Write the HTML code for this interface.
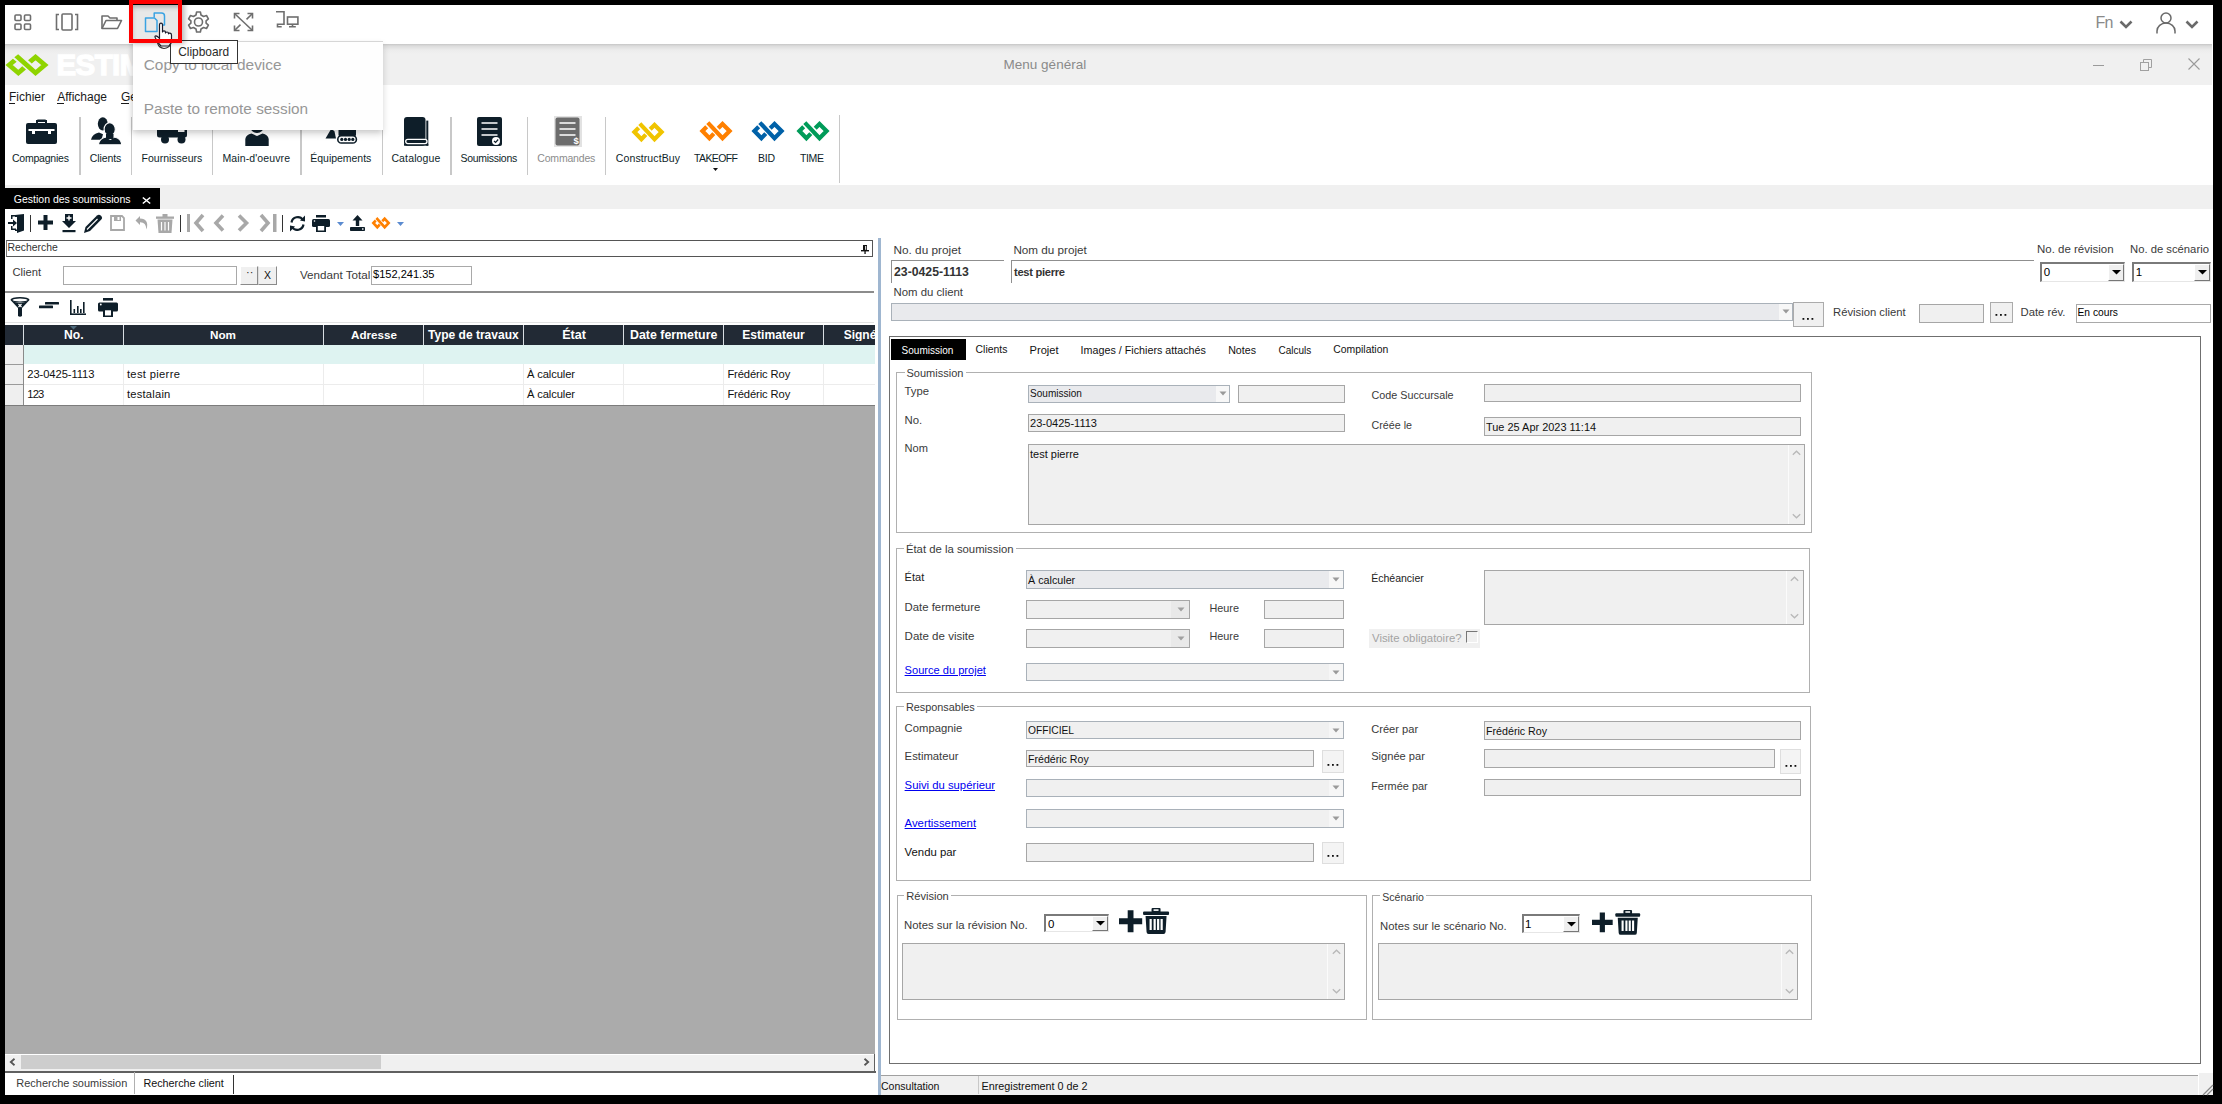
<!DOCTYPE html>
<html><head><meta charset="utf-8"><title>Menu général</title>
<style>
html,body{margin:0;padding:0;}
body{width:2222px;height:1104px;position:relative;overflow:hidden;background:#000;font-family:"Liberation Sans",sans-serif;}
.t{position:absolute;white-space:pre;line-height:1;font-family:"Liberation Sans",sans-serif;}
.r{position:absolute;box-sizing:border-box;}
svg.r{overflow:visible;}
</style></head><body>

<div class="r" style="left:5.0px;top:5.0px;width:2208.0px;height:1089.7px;background:#fff;"></div>
<div class="r" style="left:5.0px;top:5.0px;width:2208.0px;height:39.0px;background:#fff;"></div>
<svg class="r" style="left:14px;top:14px;" width="18" height="17" viewBox="0 0 18 17"><g fill="none" stroke="#6e6e6e" stroke-width="1.6"><rect x="1" y="1" width="6" height="5.5" rx="1"/><rect x="10.5" y="1" width="6" height="5.5" rx="1"/><rect x="1" y="10" width="6" height="5.5" rx="1"/><rect x="10.5" y="10" width="6" height="5.5" rx="1"/></g></svg>
<svg class="r" style="left:55px;top:13px;" width="24" height="18" viewBox="0 0 24 18"><g fill="none" stroke="#6e6e6e" stroke-width="1.6"><path d="M4 1.5 H1.5 V16.5 H4"/><path d="M20 1.5 H22.5 V16.5 H20"/><rect x="7" y="1" width="10" height="16" rx="1"/></g></svg>
<svg class="r" style="left:101px;top:15px;" width="22" height="15" viewBox="0 0 22 15"><g fill="none" stroke="#6e6e6e" stroke-width="1.6" stroke-linejoin="round"><path d="M1 13.5 V1 H7 L9 3 H16 V5.5"/><path d="M1 13.5 L5 5.5 H20.5 L16.5 13.5 Z"/></g></svg>
<div class="r" style="left:129.0px;top:5.0px;width:53.0px;height:38.0px;background:#e8e8e8;box-shadow:inset 5px 4px 5px -2px rgba(0,0,0,0.28);"></div>
<svg class="r" style="left:144px;top:12px;" width="22" height="21" viewBox="0 0 22 21"><g fill="none" stroke="#3aa2e2" stroke-width="1.5" stroke-linejoin="round"><path d="M10.2 5.6 V1 H17.5 Q20.5 1 20.5 4 V13 H17"/><path d="M1.5 6 H10.5 L13 8.5 V19.5 H1.5 Z"/></g></svg>
<svg class="r" style="left:188px;top:11px;" width="21" height="22" viewBox="0 0 21 22"><g fill="none" stroke="#6e6e6e" stroke-width="1.6" stroke-linejoin="round"><path d="M8.6 1 H12.4 L13 4 L15.6 5.5 L18.5 4.5 L20.4 7.8 L18.1 9.8 V12.2 L20.4 14.2 L18.5 17.5 L15.6 16.5 L13 18 L12.4 21 H8.6 L8 18 L5.4 16.5 L2.5 17.5 L0.6 14.2 L2.9 12.2 V9.8 L0.6 7.8 L2.5 4.5 L5.4 5.5 L8 4 Z"/><circle cx="10.5" cy="11" r="4"/></g></svg>
<svg class="r" style="left:233px;top:12px;" width="21" height="20" viewBox="0 0 21 20"><g fill="none" stroke="#6e6e6e" stroke-width="1.6"><path d="M1.5 1.5 L19.5 18.5"/><path d="M19.5 1.5 L13.5 7.3"/><path d="M1.5 18.5 L7.5 12.7"/><path d="M1.5 6.5 V1.5 H6.5"/><path d="M14.5 1.5 H19.5 V6.5"/><path d="M1.5 13.5 V18.5 H6.5"/><path d="M14.5 18.5 H19.5 V13.5"/></g></svg>
<svg class="r" style="left:275px;top:10px;" width="24" height="18" viewBox="0 0 24 18"><g fill="none" stroke="#6e6e6e" stroke-width="1.6"><path d="M1 1.7 H9 V14.2 H2.5 V16.7 H6.7"/><rect x="12.5" y="7" width="10.4" height="7.2"/><path d="M17.5 14.2 V16.7 M14 16.7 H20.8"/></g></svg>
<div class="t" style="left:2095.5px;top:14.76px;font-size:16px;color:#8a8a8a;letter-spacing:-0.8px;">Fn</div>
<svg class="r" style="left:2119px;top:20px;" width="14" height="9" viewBox="0 0 14 9"><path d="M1.5 1.5 L7 7 L12.5 1.5" fill="none" stroke="#6a6a6a" stroke-width="2.6"/></svg>
<svg class="r" style="left:2156px;top:12px;" width="20" height="22" viewBox="0 0 20 22"><g fill="none" stroke="#6a6a6a" stroke-width="1.5"><circle cx="10" cy="6" r="5"/><path d="M1 21.5 V19 A9 8 0 0 1 19 19 V21.5"/></g></svg>
<svg class="r" style="left:2185px;top:20px;" width="14" height="9" viewBox="0 0 14 9"><path d="M1.5 1.5 L7 7 L12.5 1.5" fill="none" stroke="#6a6a6a" stroke-width="2.6"/></svg>
<div class="r" style="left:5.0px;top:44.0px;width:2207.0px;height:41.0px;background:linear-gradient(#c6c6c6 0px,#dcdcdc 2px,#ececec 6px,#f0f0f0 10px);"></div>
<div class="t" style="left:1003.6px;top:58.47px;font-size:13.5px;color:#8a8a8a;">Menu général</div>
<div class="r" style="left:2092.5px;top:65.0px;width:11.0px;height:1.0px;background:#9a9a9a;"></div>
<svg class="r" style="left:2140px;top:59px;" width="12" height="12" viewBox="0 0 12 12"><g fill="none" stroke="#a0a0a0" stroke-width="1"><rect x="0.5" y="3.5" width="8" height="8"/><path d="M3.5 3.5 V0.5 H11.5 V8.5 H8.5"/></g></svg>
<svg class="r" style="left:2188px;top:58px;" width="12" height="12" viewBox="0 0 12 12"><g stroke="#9a9a9a" stroke-width="1.1"><path d="M0.5 0.5 L11.5 11.5 M11.5 0.5 L0.5 11.5"/></g></svg>
<svg class="r" style="left:6px;top:54px;" width="42" height="22" viewBox="0 0 32 20" preserveAspectRatio="none"><g fill="none" stroke="#8fd400" stroke-width="4.0" stroke-linejoin="miter" stroke-miterlimit="10"><path d="M6.7 5.7 L2.4 10 L9.4 17.2 L13.8 12.6"/><path d="M7.8 1.6 L22.5 17.2 L29.6 10 L22.5 2.9 L18.2 7.2"/></g></svg>
<div class="t" style="left:56.5px;top:49.93px;font-size:29.5px;color:#ffffff;font-weight:bold;letter-spacing:-0.6px;-webkit-text-stroke:1.3px #fff;">ESTIM</div>
<div class="r" style="left:5.0px;top:85.0px;width:2208.0px;height:100.0px;background:#fff;"></div>
<div class="t" style="left:9.0px;top:90.84px;font-size:12px;color:#1a1a1a;">Fichier</div>
<div class="r" style="left:9.0px;top:102.5px;width:6.0px;height:1.0px;background:#1a1a1a;"></div>
<div class="t" style="left:57.2px;top:90.84px;font-size:12px;color:#1a1a1a;">Affichage</div>
<div class="r" style="left:57.2px;top:102.5px;width:7.0px;height:1.0px;background:#1a1a1a;"></div>
<div class="t" style="left:121.0px;top:90.84px;font-size:12px;color:#1a1a1a;">Ge</div>
<div class="r" style="left:121.0px;top:102.5px;width:8.0px;height:1.0px;background:#1a1a1a;"></div>
<div class="r" style="left:79.4px;top:117.0px;width:1.2px;height:58.0px;background:#c8c8c8;"></div>
<div class="r" style="left:131.3px;top:117.0px;width:1.2px;height:58.0px;background:#c8c8c8;"></div>
<div class="r" style="left:212.2px;top:117.0px;width:1.2px;height:58.0px;background:#c8c8c8;"></div>
<div class="r" style="left:300.4px;top:117.0px;width:1.2px;height:58.0px;background:#c8c8c8;"></div>
<div class="r" style="left:381.6px;top:117.0px;width:1.2px;height:58.0px;background:#c8c8c8;"></div>
<div class="r" style="left:450.4px;top:117.0px;width:1.2px;height:58.0px;background:#c8c8c8;"></div>
<div class="r" style="left:527.3px;top:117.0px;width:1.2px;height:58.0px;background:#c8c8c8;"></div>
<div class="r" style="left:605.3px;top:117.0px;width:1.2px;height:58.0px;background:#c8c8c8;"></div>
<div class="r" style="left:839.3px;top:115.0px;width:1.2px;height:68.0px;background:#c8c8c8;"></div>
<div class="t" style="left:11.9px;top:153.11px;font-size:10.5px;color:#0e1e29;letter-spacing:-0.216px;">Compagnies</div>
<div class="t" style="left:89.8px;top:153.11px;font-size:10.5px;color:#0e1e29;letter-spacing:-0.099px;">Clients</div>
<div class="t" style="left:141.5px;top:153.11px;font-size:10.5px;color:#0e1e29;letter-spacing:0.011px;">Fournisseurs</div>
<div class="t" style="left:222.5px;top:153.11px;font-size:10.5px;color:#0e1e29;letter-spacing:0.108px;">Main-d&#x27;oeuvre</div>
<div class="t" style="left:310.3px;top:153.11px;font-size:10.5px;color:#0e1e29;letter-spacing:-0.028px;">Équipements</div>
<div class="t" style="left:391.4px;top:153.11px;font-size:10.5px;color:#0e1e29;letter-spacing:0.142px;">Catalogue</div>
<div class="t" style="left:460.5px;top:153.11px;font-size:10.5px;color:#0e1e29;letter-spacing:-0.282px;">Soumissions</div>
<div class="t" style="left:537.3px;top:153.11px;font-size:10.5px;color:#8c8c8c;letter-spacing:-0.190px;">Commandes</div>
<div class="t" style="left:615.8px;top:153.11px;font-size:10.5px;color:#0e1e29;letter-spacing:0.107px;">ConstructBuy</div>
<div class="t" style="left:694.0px;top:153.11px;font-size:10.5px;color:#0e1e29;letter-spacing:-0.606px;">TAKEOFF</div>
<div class="t" style="left:758.0px;top:153.11px;font-size:10.5px;color:#0e1e29;letter-spacing:-0.252px;">BID</div>
<div class="t" style="left:800.0px;top:153.11px;font-size:10.5px;color:#0e1e29;letter-spacing:-0.360px;">TIME</div>
<svg class="r" style="left:26px;top:119px;" width="31" height="25" viewBox="0 0 31 25"><g fill="#0e1e29"><rect x="11" y="0.5" width="9" height="2.5" rx="0.8"/><rect x="10" y="1" width="2" height="4"/><rect x="19" y="1" width="2" height="4"/><rect x="0" y="4" width="31" height="21" rx="2"/></g><g fill="#fff"><rect x="2.5" y="10" width="26" height="2"/><rect x="6" y="10" width="3" height="5"/><rect x="22" y="10" width="3" height="5"/></g></svg>
<svg class="r" style="left:91px;top:117px;" width="31" height="28" viewBox="0 0 31 28"><g fill="#0e1e29"><ellipse cx="11.8" cy="6.8" rx="5" ry="6.6"/><path d="M0 22.7 Q1.2 17.2 8 15.6 L12 17.3 L10.5 22.7 Z"/><path d="M7.3 27.8 Q8.2 21.6 14.8 20 L19.3 22.4 L23.6 20 Q30.2 21.6 30.8 27.8 Z" stroke="#fff" stroke-width="1.1"/><ellipse cx="18.7" cy="12.3" rx="5.6" ry="6.6" stroke="#fff" stroke-width="1.1"/><rect x="15" y="17" width="7.5" height="5" fill="#0e1e29"/></g></svg>
<svg class="r" style="left:156px;top:122px;" width="32" height="23" viewBox="0 0 32 23"><g fill="#0e1e29"><rect x="1" y="0" width="30" height="15.5" rx="2.5"/><circle cx="9" cy="17.5" r="4"/><circle cx="25.5" cy="17.5" r="4"/></g><rect x="22" y="8" width="6.5" height="2" fill="#fff"/></svg>
<svg class="r" style="left:245px;top:118px;" width="24" height="28" viewBox="0 0 24 28"><g fill="#0e1e29"><circle cx="12" cy="8" r="7"/><path d="M0.3 28 V21 Q1 16.8 6.5 15.5 L12 18 L17.5 15.5 Q23 16.8 23.7 21 V28 Z"/></g></svg>
<svg class="r" style="left:325px;top:118px;" width="32" height="26" viewBox="0 0 32 26"><g fill="#0e1e29"><path d="M10 4 L18 2 V8 L13 9 Z"/><rect x="13.5" y="6" width="17.5" height="12" rx="1"/><path d="M0.5 20.5 L5.5 12 Q8 11 9.5 13.5 L11 20.5 Z"/></g><rect x="12.8" y="17.8" width="18.6" height="7.2" rx="3.6" fill="#fff" stroke="#0e1e29" stroke-width="1.6"/><g fill="#0e1e29"><circle cx="16.8" cy="21.4" r="1.6"/><circle cx="20.5" cy="21.4" r="1.6"/><circle cx="24.2" cy="21.4" r="1.6"/><circle cx="27.8" cy="21.4" r="1.6"/></g></svg>
<svg class="r" style="left:403px;top:117px;" width="26" height="29" viewBox="0 0 26 29"><g fill="#0e1e29"><rect x="1" y="0" width="21.5" height="28.7" rx="3"/><rect x="23.3" y="3.6" width="2" height="25.1"/><rect x="1" y="26.9" width="24.3" height="1.8"/></g><rect x="2.7" y="22.4" width="21.3" height="4.3" rx="2.1" fill="#0e1e29" stroke="#fff" stroke-width="1.3"/></svg>
<svg class="r" style="left:477px;top:117px;" width="26" height="30" viewBox="0 0 26 30"><g><rect x="0" y="0" width="25" height="29" rx="2" fill="#0e1e29"/><g stroke="#fff" stroke-width="1.4"><path d="M4.5 6 H20.5 M4.5 12 H20.5 M4.5 18 H20.5"/></g><circle cx="19" cy="24" r="4" fill="#fff"/><path d="M17 24 L18.6 25.5 L21.2 22.5" fill="none" stroke="#0e1e29" stroke-width="1.2"/></g></svg>
<div class="r" style="left:554.0px;top:116.0px;width:28.0px;height:31.0px;background:#e2e2e2;"></div>
<svg class="r" style="left:555px;top:117px;" width="26" height="30" viewBox="0 0 26 30"><g><rect x="0.5" y="0.5" width="24" height="28" rx="2" fill="#6c6c6c"/><g stroke="#fff" stroke-width="1.4"><path d="M4.5 6 H20.5 M4.5 12 H20.5 M4.5 18 H20.5"/></g><text x="18.6" y="27.3" font-size="9.5" font-weight="bold" fill="#fff" font-family="Liberation Sans">$</text></g></svg>
<svg class="r" style="left:632px;top:122px;" width="32" height="20" viewBox="0 0 32 20" preserveAspectRatio="none"><g fill="none" stroke="#f0c400" stroke-width="4.2" stroke-linejoin="miter" stroke-miterlimit="10"><path d="M6.7 5.7 L2.4 10 L9.4 17.2 L13.8 12.6"/><path d="M7.8 1.6 L22.5 17.2 L29.6 10 L22.5 2.9 L18.2 7.2"/></g></svg>
<svg class="r" style="left:700px;top:121px;" width="32" height="20" viewBox="0 0 32 20" preserveAspectRatio="none"><g fill="none" stroke="#ff8000" stroke-width="4.2" stroke-linejoin="miter" stroke-miterlimit="10"><path d="M6.7 5.7 L2.4 10 L9.4 17.2 L13.8 12.6"/><path d="M7.8 1.6 L22.5 17.2 L29.6 10 L22.5 2.9 L18.2 7.2"/></g></svg>
<svg class="r" style="left:752px;top:121px;" width="32" height="20" viewBox="0 0 32 20" preserveAspectRatio="none"><g fill="none" stroke="#0061a8" stroke-width="4.2" stroke-linejoin="miter" stroke-miterlimit="10"><path d="M6.7 5.7 L2.4 10 L9.4 17.2 L13.8 12.6"/><path d="M7.8 1.6 L22.5 17.2 L29.6 10 L22.5 2.9 L18.2 7.2"/></g></svg>
<svg class="r" style="left:797px;top:121px;" width="32" height="20" viewBox="0 0 32 20" preserveAspectRatio="none"><g fill="none" stroke="#009b59" stroke-width="4.2" stroke-linejoin="miter" stroke-miterlimit="10"><path d="M6.7 5.7 L2.4 10 L9.4 17.2 L13.8 12.6"/><path d="M7.8 1.6 L22.5 17.2 L29.6 10 L22.5 2.9 L18.2 7.2"/></g></svg>
<svg class="r" style="left:713px;top:168px;" width="5" height="3" viewBox="0 0 5 3"><path d="M0 0 H5 L2.5 3 Z" fill="#111"/></svg>
<div class="r" style="left:5.0px;top:185.0px;width:2208.0px;height:24.0px;background:#f0f0f0;"></div>
<div class="r" style="left:5.0px;top:188.0px;width:155.0px;height:21.0px;background:#000;"></div>
<div class="t" style="left:13.8px;top:194.01px;font-size:10.5px;color:#ffffff;">Gestion des soumissions</div>
<svg class="r" style="left:142px;top:197px;" width="9" height="7" viewBox="0 0 9 7"><path d="M0.8 0.5 L8.2 6.5 M8.2 0.5 L0.8 6.5" stroke="#fff" stroke-width="1.6"/></svg>
<div class="r" style="left:5.0px;top:209.0px;width:2208.0px;height:31.0px;background:#fff;"></div>
<svg class="r" style="left:8px;top:214px;" width="17" height="19" viewBox="0 0 17 19"><g fill="#0e1e29"><path d="M7 1 L16 0 V16.5 L9 19 V17 H7 V15.5 H9 V3 H7 Z"/><path d="M3 5 V1 H8 V2.5 H4.5 V5 Z"/><path d="M3 12 V16 H8 V14.5 H4.5 V12 Z"/><path d="M0 8 H5 V5.5 L9 9 L5 12.5 V10 H0 Z"/></g></svg>
<div class="r" style="left:30.0px;top:215.0px;width:1.2px;height:17.0px;background:#333;"></div>
<svg class="r" style="left:38px;top:215px;" width="15" height="15" viewBox="0 0 15 15"><path d="M5.5 0 H9.5 V5.5 H15 V9.5 H9.5 V15 H5.5 V9.5 H0 V5.5 H5.5 Z" fill="#0e1e29"/></svg>
<svg class="r" style="left:62px;top:214px;" width="14" height="19" viewBox="0 0 14 19"><g fill="#0e1e29"><path d="M3 0 H11 V7 H14 L7 14 L0 7 H3 Z"/><rect x="0.5" y="16" width="13" height="2.2"/></g><path d="M7 1.5 V6.5 M4.5 4 H9.5" stroke="#fff" stroke-width="1.4"/></svg>
<svg class="r" style="left:84px;top:214px;" width="19" height="19" viewBox="0 0 19 19"><g fill="#0e1e29"><path d="M0 19 L1.5 13 L13 1.5 Q15 -0.3 17 1.7 Q19 3.7 17.3 5.5 L6 17 Z"/></g><path d="M3 15.5 L13.5 5" stroke="#fff" stroke-width="1.1"/></svg>
<svg class="r" style="left:110px;top:215px;" width="15" height="16" viewBox="0 0 15 16"><g fill="none" stroke="#a8a8a8" stroke-width="1.8"><path d="M1 1 H12 L14 3 V15 H1 Z"/></g><rect x="4" y="1" width="7" height="5" fill="#a8a8a8"/><rect x="7.5" y="2" width="2" height="3" fill="#fff"/></svg>
<svg class="r" style="left:135px;top:215px;" width="14" height="15" viewBox="0 0 14 15"><path d="M5 1 L0.5 5.5 L5 10 V7.2 Q11 7 11.5 14.5 Q14.5 4 5 3.6 Z" fill="#a8a8a8"/></svg>
<svg class="r" style="left:156px;top:214px;" width="18" height="19" viewBox="0 0 18 19"><g fill="#a8a8a8"><rect x="0" y="2.5" width="18" height="2.3"/><rect x="6.5" y="0" width="5" height="3"/><path d="M1.5 5.5 H16.5 L15.5 19 H2.5 Z"/></g><g stroke="#fff" stroke-width="1.2"><path d="M5.5 8 V16.5 M9 8 V16.5 M12.5 8 V16.5"/></g></svg>
<div class="r" style="left:180.0px;top:215.0px;width:1.2px;height:17.0px;background:#333;"></div>
<svg class="r" style="left:187px;top:214px;" width="18" height="18" viewBox="0 0 18 18"><g fill="#a8a8a8"><rect x="0" y="0" width="3" height="18"/><path d="M16 1 L9 9 L16 17" fill="none" stroke="#a8a8a8" stroke-width="3.6"/></g></svg>
<svg class="r" style="left:213px;top:214px;" width="12" height="18" viewBox="0 0 12 18"><path d="M10 1.5 L3 9 L10 16.5" fill="none" stroke="#a8a8a8" stroke-width="3.6"/></svg>
<svg class="r" style="left:237px;top:214px;" width="13" height="18" viewBox="0 0 13 18"><path d="M2 1.5 L9.5 9 L2 16.5" fill="none" stroke="#a8a8a8" stroke-width="3.6"/></svg>
<svg class="r" style="left:259px;top:214px;" width="18" height="18" viewBox="0 0 18 18"><g><path d="M2 1 L9 9 L2 17" fill="none" stroke="#a8a8a8" stroke-width="3.6"/><rect x="14" y="0" width="3.5" height="18" fill="#a8a8a8"/></g></svg>
<div class="r" style="left:282.0px;top:215.0px;width:1.2px;height:17.0px;background:#333;"></div>
<svg class="r" style="left:289px;top:215px;" width="17" height="17" viewBox="0 0 17 17"><g fill="none" stroke="#0e1e29" stroke-width="2.2"><path d="M2.5 7.5 A6.3 6.3 0 0 1 14 5"/><path d="M14.5 9.5 A6.3 6.3 0 0 1 3 12"/></g><g fill="#0e1e29"><path d="M11 5.5 L16 0.5 V6.5 Z"/><path d="M6 11.5 L1 16.5 V10.5 Z"/></g></svg>
<svg class="r" style="left:312px;top:215px;" width="18" height="17" viewBox="0 0 18 17"><g fill="#0e1e29"><rect x="4" y="0" width="10" height="2.5"/><rect x="0" y="4" width="18" height="8" rx="1.5"/><rect x="4" y="9.5" width="10" height="7.5"/></g><rect x="5.8" y="11" width="6.4" height="4.5" fill="#fff"/><circle cx="2.5" cy="6" r="0.8" fill="#fff"/></svg>
<svg class="r" style="left:336.5px;top:222px;" width="7" height="4" viewBox="0 0 7 4"><path d="M0 0 H7 L3.5 4 Z" fill="#5b8bd0"/></svg>
<svg class="r" style="left:350px;top:215px;" width="15" height="16" viewBox="0 0 15 16"><g fill="#0e1e29"><path d="M7.5 0 L12.5 5.5 H9.2 V11 H5.8 V5.5 H2.5 Z"/><rect x="0" y="12" width="15" height="4" rx="0.8"/></g><rect x="12" y="13.3" width="1.5" height="1.4" fill="#fff"/></svg>
<svg class="r" style="left:372px;top:217px;" width="18" height="12" viewBox="0 0 32 20" preserveAspectRatio="none"><g fill="none" stroke="#ff8000" stroke-width="4.6" stroke-linejoin="miter" stroke-miterlimit="10"><path d="M6.7 5.7 L2.4 10 L9.4 17.2 L13.8 12.6"/><path d="M7.8 1.6 L22.5 17.2 L29.6 10 L22.5 2.9 L18.2 7.2"/></g></svg>
<svg class="r" style="left:396.5px;top:222px;" width="7" height="4" viewBox="0 0 7 4"><path d="M0 0 H7 L3.5 4 Z" fill="#5b8bd0"/></svg>
<div class="r" style="left:5.5px;top:240.0px;width:867.3px;height:17.0px;border-top:1.5px solid #555;border-bottom:1.5px solid #555;border-left:1px solid #777;border-right:1px solid #555;background:#fff;"></div>
<div class="t" style="left:7.4px;top:243.18px;font-size:10.42px;color:#333;">Recherche</div>
<svg class="r" style="left:861px;top:244.5px;" width="8" height="9" viewBox="0 0 8 9"><g fill="#111"><rect x="2" y="0" width="4" height="6"/><rect x="0" y="5" width="8" height="1.4"/><rect x="3.4" y="6" width="1.3" height="3"/></g><rect x="4.2" y="1" width="1" height="3.8" fill="#fff"/></svg>
<div class="t" style="left:12.4px;top:267.33px;font-size:11.19px;color:#3a3a3a;">Client</div>
<div class="r" style="left:63.3px;top:266.0px;width:173.4px;height:19.0px;border:1px solid #a9a9a9;background:#fff;"></div>
<div class="r" style="left:240.3px;top:266.0px;width:18.0px;height:19.0px;background:#f0f0f0;border-top:1px solid #fff;border-left:1px solid #fff;border-right:1.5px solid #8a8a8a;border-bottom:1.5px solid #8a8a8a;"></div>
<div class="t" style="left:246.0px;top:266.69px;font-size:11px;color:#222;">··</div>
<div class="r" style="left:258.3px;top:266.0px;width:18.5px;height:19.0px;background:#f0f0f0;border-top:1px solid #fff;border-left:1px solid #ddd;border-right:1.5px solid #8a8a8a;border-bottom:1.5px solid #8a8a8a;"></div>
<div class="t" style="left:264.0px;top:270.41px;font-size:10.5px;color:#111;">X</div>
<div class="t" style="left:300.0px;top:268.84px;font-size:11.65px;color:#3a3a3a;">Vendant Total</div>
<div class="r" style="left:371.0px;top:266.0px;width:101.0px;height:19.0px;border:1px solid #a9a9a9;background:#fff;"></div>
<div class="t" style="left:373.0px;top:269.34px;font-size:11.06px;color:#000;">$152,241.35</div>
<div class="r" style="left:5.0px;top:290.5px;width:869.0px;height:2.0px;background:#8c8c8c;"></div>
<svg class="r" style="left:10px;top:297px;" width="20" height="20" viewBox="0 0 20 20"><g fill="#0e1e29"><ellipse cx="10" cy="2.8" rx="9.5" ry="2.8"/><path d="M0.5 3 Q10 9 19.5 3 L12 11 V19 Q10 20.5 8 19 V11 Z"/></g><ellipse cx="10" cy="3" rx="7.5" ry="1.5" fill="#fff"/><path d="M8.5 7 L11.5 10 M11.5 7 L8.5 10" stroke="#fff" stroke-width="1.2"/></svg>
<svg class="r" style="left:39px;top:302px;" width="20" height="9" viewBox="0 0 20 9"><g fill="#0e1e29"><rect x="6" y="0" width="14" height="2.6" rx="0.5"/><rect x="0" y="3.5" width="14" height="2.8" rx="0.5"/></g></svg>
<svg class="r" style="left:70px;top:300px;" width="16" height="15" viewBox="0 0 16 15"><g fill="#0e1e29"><rect x="0" y="0" width="1.6" height="15"/><rect x="0" y="13.4" width="16" height="1.6"/><rect x="3.5" y="9" width="1.6" height="4"/><rect x="7" y="6" width="1.6" height="7"/><rect x="10" y="9" width="1.6" height="4"/><rect x="13" y="2" width="1.6" height="11"/></g></svg>
<svg class="r" style="left:98px;top:298px;" width="20" height="19" viewBox="0 0 20 19"><g fill="#0e1e29"><rect x="5" y="0" width="10" height="2.6"/><rect x="0" y="4.5" width="20" height="9" rx="1.5"/><rect x="5" y="11" width="10" height="8"/></g><rect x="7" y="12.3" width="6" height="5.2" fill="#fff"/><circle cx="2.8" cy="6.5" r="0.9" fill="#fff"/></svg>
<div class="r" style="left:5.0px;top:322.0px;width:869.0px;height:1.2px;background:#e2e2e2;"></div>
<div class="r" style="left:5.0px;top:324.5px;width:870.0px;height:20.5px;background:#222a35;"></div>
<div class="r" style="left:22.9px;top:325.0px;width:1.3px;height:20.0px;background:#d8dde2;"></div>
<div class="r" style="left:122.9px;top:325.0px;width:1.3px;height:20.0px;background:#d8dde2;"></div>
<div class="r" style="left:323.2px;top:325.0px;width:1.3px;height:20.0px;background:#d8dde2;"></div>
<div class="r" style="left:423.1px;top:325.0px;width:1.3px;height:20.0px;background:#d8dde2;"></div>
<div class="r" style="left:523.0px;top:325.0px;width:1.3px;height:20.0px;background:#d8dde2;"></div>
<div class="r" style="left:622.7px;top:325.0px;width:1.3px;height:20.0px;background:#d8dde2;"></div>
<div class="r" style="left:722.7px;top:325.0px;width:1.3px;height:20.0px;background:#d8dde2;"></div>
<div class="r" style="left:822.9px;top:325.0px;width:1.3px;height:20.0px;background:#d8dde2;"></div>
<div class="t" style="left:64.0px;top:328.95px;font-size:12.11px;color:#fff;font-weight:bold;">No.</div>
<div class="t" style="left:210.0px;top:329.30px;font-size:11.7px;color:#fff;font-weight:bold;">Nom</div>
<div class="t" style="left:351.0px;top:329.36px;font-size:11.63px;color:#fff;font-weight:bold;">Adresse</div>
<div class="t" style="left:428.0px;top:329.01px;font-size:12.04px;color:#fff;font-weight:bold;">Type de travaux</div>
<div class="t" style="left:562.2px;top:328.53px;font-size:12.6px;color:#fff;font-weight:bold;">État</div>
<div class="t" style="left:630.0px;top:328.72px;font-size:12.38px;color:#fff;font-weight:bold;">Date fermeture</div>
<div class="t" style="left:742.3px;top:328.97px;font-size:12.09px;color:#fff;font-weight:bold;">Estimateur</div>
<div class="t" style="left:843.7px;top:329px;font-size:12px;color:#fff;font-weight:bold;width:31px;overflow:hidden;">Signé</div>
<svg class="r" style="left:70px;top:325.5px;" width="7" height="4" viewBox="0 0 7 4"><path d="M0 0 H7 L3.5 3.5 Z" fill="#4e6a7c"/></svg>
<div class="r" style="left:5.0px;top:345.0px;width:18.4px;height:60.0px;background:#efefef;"></div>
<div class="r" style="left:5.0px;top:364.0px;width:18.4px;height:1.0px;background:#9a9a9a;"></div>
<div class="r" style="left:5.0px;top:384.0px;width:18.4px;height:1.0px;background:#9a9a9a;"></div>
<div class="r" style="left:22.8px;top:345.0px;width:1.2px;height:60.0px;background:#8a8a8a;"></div>
<div class="r" style="left:24.0px;top:345.0px;width:850.5px;height:19.3px;background:#def3f1;"></div>
<div class="r" style="left:24.0px;top:364.3px;width:850.5px;height:40.7px;background:#fff;"></div>
<div class="r" style="left:24.0px;top:384.0px;width:850.5px;height:1.0px;background:#ececec;"></div>
<div class="r" style="left:122.9px;top:364.3px;width:1.0px;height:40.7px;background:#ececec;"></div>
<div class="r" style="left:323.2px;top:364.3px;width:1.0px;height:40.7px;background:#ececec;"></div>
<div class="r" style="left:423.1px;top:364.3px;width:1.0px;height:40.7px;background:#ececec;"></div>
<div class="r" style="left:523.0px;top:364.3px;width:1.0px;height:40.7px;background:#ececec;"></div>
<div class="r" style="left:622.7px;top:364.3px;width:1.0px;height:40.7px;background:#ececec;"></div>
<div class="r" style="left:722.7px;top:364.3px;width:1.0px;height:40.7px;background:#ececec;"></div>
<div class="r" style="left:822.9px;top:364.3px;width:1.0px;height:40.7px;background:#ececec;"></div>
<div class="t" style="left:27.3px;top:368.52px;font-size:11.2px;color:#111;letter-spacing:-0.080px;">23-0425-1113</div>
<div class="t" style="left:126.9px;top:368.52px;font-size:11.2px;color:#111;letter-spacing:0.331px;">test pierre</div>
<div class="t" style="left:527.0px;top:368.52px;font-size:11.2px;color:#111;letter-spacing:-0.130px;">À calculer</div>
<div class="t" style="left:727.4px;top:368.52px;font-size:11.2px;color:#111;letter-spacing:-0.109px;">Frédéric Roy</div>
<div class="t" style="left:27.3px;top:388.52px;font-size:11.2px;color:#111;letter-spacing:-0.842px;">123</div>
<div class="t" style="left:126.9px;top:388.52px;font-size:11.2px;color:#111;letter-spacing:0.223px;">testalain</div>
<div class="t" style="left:527.0px;top:388.52px;font-size:11.2px;color:#111;letter-spacing:-0.130px;">À calculer</div>
<div class="t" style="left:727.4px;top:388.52px;font-size:11.2px;color:#111;letter-spacing:-0.109px;">Frédéric Roy</div>
<div class="r" style="left:5.0px;top:404.5px;width:870.0px;height:1.6px;background:#7c7c7c;"></div>
<div class="r" style="left:5.0px;top:406.0px;width:870.0px;height:648.0px;background:#ababab;"></div>
<div class="r" style="left:5.0px;top:1054.0px;width:870.0px;height:17.0px;background:#f0f0f0;border-top:1px solid #fff;"></div>
<div class="r" style="left:21.4px;top:1055.3px;width:359.3px;height:14.2px;background:#cdcdcd;"></div>
<svg class="r" style="left:9px;top:1058px;" width="7" height="8" viewBox="0 0 7 8"><path d="M5.5 0.8 L1.8 4 L5.5 7.2" fill="none" stroke="#555" stroke-width="1.8"/></svg>
<svg class="r" style="left:863px;top:1058px;" width="7" height="8" viewBox="0 0 7 8"><path d="M1.5 0.8 L5.2 4 L1.5 7.2" fill="none" stroke="#555" stroke-width="1.8"/></svg>
<div class="r" style="left:5.0px;top:1071.2px;width:870.5px;height:1.5px;background:#606060;"></div>
<div class="r" style="left:874.0px;top:1054.0px;width:1.2px;height:18.0px;background:#606060;"></div>
<div class="r" style="left:5.0px;top:1072.7px;width:870.0px;height:22.0px;background:#fff;"></div>
<div class="r" style="left:134.0px;top:1072.0px;width:1.0px;height:22.0px;background:#b0b0b0;"></div>
<div class="r" style="left:233.0px;top:1075.0px;width:1.2px;height:18.5px;background:#333;"></div>
<div class="t" style="left:16.3px;top:1078.21px;font-size:10.98px;color:#3a3a3a;">Recherche soumission</div>
<div class="t" style="left:143.4px;top:1078.35px;font-size:10.81px;color:#111;">Recherche client</div>
<div class="r" style="left:878.1px;top:238.0px;width:2.8px;height:856.7px;background:#9fb6d0;"></div>
<div class="t" style="left:893.5px;top:244.22px;font-size:11.79px;color:#3a3a3a;">No. du projet</div>
<div class="r" style="left:891.3px;top:260.0px;width:112.3px;height:1.2px;background:#8f8f8f;"></div>
<div class="r" style="left:891.3px;top:260.0px;width:1.2px;height:22.5px;background:#8f8f8f;"></div>
<div class="t" style="left:894.0px;top:265.62px;font-size:12.26px;color:#333;font-weight:bold;">23-0425-1113</div>
<div class="t" style="left:1013.4px;top:244.30px;font-size:11.69px;color:#3a3a3a;">Nom du projet</div>
<div class="r" style="left:1011.2px;top:260.0px;width:1022.4px;height:1.2px;background:#8f8f8f;"></div>
<div class="r" style="left:1011.2px;top:260.0px;width:1.2px;height:22.5px;background:#8f8f8f;"></div>
<div class="t" style="left:1014.0px;top:266.54px;font-size:11.17px;color:#333;font-weight:bold;letter-spacing:-0.3px;">test pierre</div>
<div class="t" style="left:2037.0px;top:244.27px;font-size:11.49px;color:#3a3a3a;">No. de révision</div>
<div class="r" style="left:2040.2px;top:262.3px;width:85.3px;height:19.5px;background:#fff;border-top:2px solid #7a7a7a;border-left:2px solid #7a7a7a;border-bottom:1px solid #e6e6e6;border-right:1px solid #e6e6e6;"></div>
<div class="r" style="left:2108.0px;top:264.3px;width:16.0px;height:16.5px;background:#efefef;border-right:1.5px solid #777;border-bottom:1.5px solid #777;border-top:1px solid #fff;border-left:1px solid #fff;"></div>
<svg class="r" style="left:2112.25px;top:270.05px;" width="9" height="5" viewBox="0 0 9 5"><path d="M0 0 H9 L4.5 4.5 Z" fill="#000"/></svg>
<div class="t" style="left:2043.7px;top:267.37px;font-size:11.5px;color:#000;">0</div>
<div class="t" style="left:2130.0px;top:244.45px;font-size:11.28px;color:#3a3a3a;">No. de scénario</div>
<div class="r" style="left:2132.3px;top:262.3px;width:79.1px;height:19.5px;background:#fff;border-top:2px solid #7a7a7a;border-left:2px solid #7a7a7a;border-bottom:1px solid #e6e6e6;border-right:1px solid #e6e6e6;"></div>
<div class="r" style="left:2194.0px;top:264.3px;width:15.9px;height:16.5px;background:#efefef;border-right:1.5px solid #777;border-bottom:1.5px solid #777;border-top:1px solid #fff;border-left:1px solid #fff;"></div>
<svg class="r" style="left:2198.2px;top:270.05px;" width="9" height="5" viewBox="0 0 9 5"><path d="M0 0 H9 L4.5 4.5 Z" fill="#000"/></svg>
<div class="t" style="left:2135.8px;top:267.37px;font-size:11.5px;color:#000;">1</div>
<div class="t" style="left:893.5px;top:287.38px;font-size:11.37px;color:#3a3a3a;">Nom du client</div>
<div class="r" style="left:891.3px;top:302.5px;width:902.1px;height:18.2px;background:#e9eaed;border:1px solid #a9b1b9;"></div>
<div class="r" style="left:1779.0px;top:303.5px;width:13.4px;height:16.2px;background:#f7f7f7;"></div>
<svg class="r" style="left:1782.2px;top:309.1px;" width="8" height="5" viewBox="0 0 8 5"><path d="M0.5 0.5 H7.5 L4 4.5 Z" fill="#9a9a9a"/></svg>
<div class="r" style="left:1793.0px;top:302.3px;width:30.6px;height:24.5px;background:#f0f0f0;border:1px solid #ababab;"></div>
<svg class="r" style="left:1802.3px;top:317.8px;" width="12" height="3" viewBox="0 0 12 3"><g fill="#111"><rect x="0.5" y="0" width="1.8" height="1.8"/><rect x="5" y="0" width="1.8" height="1.8"/><rect x="9.5" y="0" width="1.8" height="1.8"/></g></svg>
<div class="t" style="left:1833.0px;top:307.25px;font-size:11.28px;color:#3a3a3a;">Révision client</div>
<div class="r" style="left:1919.0px;top:304.2px;width:64.6px;height:18.5px;background:#f0f0f0;border:1px solid #a6a6a6;"></div>
<div class="r" style="left:1990.0px;top:302.3px;width:22.6px;height:20.4px;background:#f0f0f0;border:1px solid #ababab;"></div>
<svg class="r" style="left:1995.3px;top:313.7px;" width="12" height="3" viewBox="0 0 12 3"><g fill="#111"><rect x="0.5" y="0" width="1.8" height="1.8"/><rect x="5" y="0" width="1.8" height="1.8"/><rect x="9.5" y="0" width="1.8" height="1.8"/></g></svg>
<div class="t" style="left:2020.5px;top:307.23px;font-size:11.3px;color:#3a3a3a;">Date rév.</div>
<div class="r" style="left:2076.0px;top:304.3px;width:134.7px;height:18.4px;background:#fff;border:1px solid #a9a9a9;"></div>
<div class="t" style="left:2077.5px;top:308.11px;font-size:10.26px;color:#000;">En cours</div>
<div class="r" style="left:889.3px;top:335.8px;width:1311.7px;height:728.2px;border:1.2px solid #6f6f6f;"></div>
<div class="r" style="left:890.5px;top:339.2px;width:75.5px;height:20.5px;background:#000;"></div>
<div class="t" style="left:901.6px;top:345.52px;font-size:10.02px;color:#fff;">Soumission</div>
<div class="t" style="left:975.6px;top:345.20px;font-size:10.4px;color:#111;">Clients</div>
<div class="t" style="left:1029.6px;top:344.60px;font-size:11.1px;color:#111;">Projet</div>
<div class="t" style="left:1080.6px;top:344.91px;font-size:10.74px;color:#111;">Images / Fichiers attachés</div>
<div class="t" style="left:1228.2px;top:344.99px;font-size:10.64px;color:#111;">Notes</div>
<div class="t" style="left:1278.5px;top:345.54px;font-size:10.0px;color:#111;">Calculs</div>
<div class="t" style="left:1333.3px;top:345.18px;font-size:10.42px;color:#111;">Compilation</div>
<div class="r" style="left:896.2px;top:372.0px;width:916.2px;height:160.8px;border:1px solid #b0b0b0;"></div>
<div class="r" style="left:904.5px;top:370.0px;width:61.0px;height:4.0px;background:#fff;"></div>
<div class="t" style="left:906.5px;top:367.86px;font-size:11.03px;color:#3a3a3a;">Soumission</div>
<div class="t" style="left:904.6px;top:386.03px;font-size:11.3px;color:#3a3a3a;">Type</div>
<div class="r" style="left:1028.2px;top:384.5px;width:202.3px;height:18.1px;background:#e9eaed;border:1px solid #a9b1b9;"></div>
<div class="r" style="left:1215.7px;top:385.5px;width:13.8px;height:16.1px;background:#f7f7f7;"></div>
<svg class="r" style="left:1219.1px;top:391.05px;" width="8" height="5" viewBox="0 0 8 5"><path d="M0.5 0.5 H7.5 L4 4.5 Z" fill="#9a9a9a"/></svg>
<div class="t" style="left:1030.0px;top:388.68px;font-size:10.06px;color:#111;">Soumission</div>
<div class="r" style="left:1238.3px;top:384.5px;width:106.4px;height:18.1px;background:#f0f0f0;border:1px solid #a6a6a6;"></div>
<div class="t" style="left:904.6px;top:415.18px;font-size:11.37px;color:#3a3a3a;">No.</div>
<div class="r" style="left:1028.2px;top:414.2px;width:316.5px;height:18.2px;background:#f0f0f0;border:1px solid #a6a6a6;"></div>
<div class="t" style="left:1030.0px;top:418.07px;font-size:11.02px;color:#111;">23-0425-1113</div>
<div class="t" style="left:904.6px;top:443.42px;font-size:11.08px;color:#3a3a3a;">Nom</div>
<div class="r" style="left:1028.2px;top:444.2px;width:777.1px;height:80.4px;background:#f0f0f0;border:1px solid #a6a6a6;"></div>
<div class="r" style="left:1788.4px;top:445.2px;width:1.0px;height:78.4px;background:#fbfbfb;"></div>
<svg class="r" style="left:1792.35px;top:450.2px;" width="9" height="6" viewBox="0 0 9 6"><path d="M0.8 4.8 L4.5 1.2 L8.2 4.8" fill="none" stroke="#b8b8b8" stroke-width="1.3"/></svg>
<svg class="r" style="left:1792.35px;top:512.6px;" width="9" height="6" viewBox="0 0 9 6"><path d="M0.8 1.2 L4.5 4.8 L8.2 1.2" fill="none" stroke="#b8b8b8" stroke-width="1.3"/></svg>
<div class="t" style="left:1030.0px;top:448.79px;font-size:11.0px;color:#111;">test pierre</div>
<div class="t" style="left:1371.6px;top:390.08px;font-size:10.77px;color:#3a3a3a;">Code Succursale</div>
<div class="r" style="left:1484.3px;top:384.4px;width:317.1px;height:18.1px;background:#f0f0f0;border:1px solid #a6a6a6;"></div>
<div class="t" style="left:1371.6px;top:420.45px;font-size:10.69px;color:#3a3a3a;">Créée le</div>
<div class="r" style="left:1484.3px;top:417.2px;width:317.1px;height:18.4px;background:#f0f0f0;border:1px solid #a6a6a6;"></div>
<div class="t" style="left:1486.0px;top:421.53px;font-size:10.95px;color:#111;">Tue 25 Apr 2023 11:14</div>
<div class="r" style="left:896.4px;top:548.0px;width:913.9px;height:145.1px;border:1px solid #b0b0b0;"></div>
<div class="r" style="left:903.9px;top:546.5px;width:111.8px;height:4.0px;background:#fff;"></div>
<div class="t" style="left:905.9px;top:544.20px;font-size:11.34px;color:#3a3a3a;">État de la soumission</div>
<div class="t" style="left:904.6px;top:571.62px;font-size:11.08px;color:#222;">État</div>
<div class="r" style="left:1026.4px;top:570.2px;width:317.3px;height:18.4px;background:#e9eaed;border:1px solid #a9b1b9;"></div>
<div class="r" style="left:1328.9px;top:571.2px;width:13.8px;height:16.4px;background:#f7f7f7;"></div>
<svg class="r" style="left:1332.3000000000002px;top:576.9000000000001px;" width="8" height="5" viewBox="0 0 8 5"><path d="M0.5 0.5 H7.5 L4 4.5 Z" fill="#9a9a9a"/></svg>
<div class="t" style="left:1028.0px;top:575.10px;font-size:10.75px;color:#111;">À calculer</div>
<div class="t" style="left:904.6px;top:602.09px;font-size:11.35px;color:#3a3a3a;">Date fermeture</div>
<div class="r" style="left:1026.4px;top:600.3px;width:163.3px;height:18.4px;background:#f0f0f0;border:1px solid #a6a6a6;"></div>
<div class="r" style="left:1171.3px;top:601.3px;width:17.4px;height:16.4px;background:#e9e9e9;"></div>
<svg class="r" style="left:1176.5px;top:607.0px;" width="8" height="5" viewBox="0 0 8 5"><path d="M0.5 0.5 H7.5 L4 4.5 Z" fill="#a0a0a0"/></svg>
<div class="t" style="left:1209.4px;top:602.50px;font-size:10.87px;color:#3a3a3a;">Heure</div>
<div class="r" style="left:1264.4px;top:600.3px;width:79.3px;height:18.4px;background:#f0f0f0;border:1px solid #a6a6a6;"></div>
<div class="t" style="left:904.6px;top:630.85px;font-size:11.52px;color:#3a3a3a;">Date de visite</div>
<div class="r" style="left:1026.4px;top:629.3px;width:163.3px;height:18.6px;background:#f0f0f0;border:1px solid #a6a6a6;"></div>
<div class="r" style="left:1171.3px;top:630.3px;width:17.4px;height:16.6px;background:#e9e9e9;"></div>
<svg class="r" style="left:1176.5px;top:636.0999999999999px;" width="8" height="5" viewBox="0 0 8 5"><path d="M0.5 0.5 H7.5 L4 4.5 Z" fill="#a0a0a0"/></svg>
<div class="t" style="left:1209.4px;top:631.40px;font-size:10.87px;color:#3a3a3a;">Heure</div>
<div class="r" style="left:1264.4px;top:629.3px;width:79.3px;height:18.6px;background:#f0f0f0;border:1px solid #a6a6a6;"></div>
<div class="t" style="left:904.6px;top:665.11px;font-size:11.09px;color:#0000f0;text-decoration:underline;">Source du projet</div>
<div class="r" style="left:1026.4px;top:663.1px;width:317.3px;height:18.2px;background:#f0f0f0;border:1px solid #a9b1b9;"></div>
<div class="r" style="left:1328.9px;top:664.1px;width:13.8px;height:16.2px;background:#f6f6f6;"></div>
<svg class="r" style="left:1332.3000000000002px;top:669.7px;" width="8" height="5" viewBox="0 0 8 5"><path d="M0.5 0.5 H7.5 L4 4.5 Z" fill="#9a9a9a"/></svg>
<div class="t" style="left:1371.2px;top:572.89px;font-size:10.53px;color:#222;">Échéancier</div>
<div class="r" style="left:1484.4px;top:570.2px;width:319.2px;height:54.5px;background:#f0f0f0;border:1px solid #a6a6a6;"></div>
<div class="r" style="left:1786.3px;top:571.2px;width:1.0px;height:52.5px;background:#fbfbfb;"></div>
<svg class="r" style="left:1790.4499999999998px;top:576.2px;" width="9" height="6" viewBox="0 0 9 6"><path d="M0.8 4.8 L4.5 1.2 L8.2 4.8" fill="none" stroke="#b8b8b8" stroke-width="1.3"/></svg>
<svg class="r" style="left:1790.4499999999998px;top:612.7px;" width="9" height="6" viewBox="0 0 9 6"><path d="M0.8 1.2 L4.5 4.8 L8.2 1.2" fill="none" stroke="#b8b8b8" stroke-width="1.3"/></svg>
<div class="r" style="left:1369.0px;top:629.0px;width:110.6px;height:18.6px;background:#f0f0f0;"></div>
<div class="t" style="left:1372.0px;top:632.67px;font-size:11.38px;color:#a3a3a3;">Visite obligatoire?</div>
<div class="r" style="left:1466.0px;top:631.2px;width:12.0px;height:12.0px;background:#f0f0f0;border-top:1.5px solid #777;border-left:1.5px solid #777;border-right:1px solid #fff;border-bottom:1px solid #fff;"></div>
<div class="r" style="left:896.4px;top:706.0px;width:914.9px;height:175.3px;border:1px solid #b0b0b0;"></div>
<div class="r" style="left:903.9px;top:704.6px;width:73.0px;height:4.0px;background:#fff;"></div>
<div class="t" style="left:905.9px;top:702.48px;font-size:10.89px;color:#3a3a3a;">Responsables</div>
<div class="t" style="left:904.6px;top:723.25px;font-size:11.28px;color:#3a3a3a;">Compagnie</div>
<div class="r" style="left:1026.4px;top:721.4px;width:317.3px;height:18.0px;background:#f0f0f0;border:1px solid #a9b1b9;"></div>
<div class="r" style="left:1328.9px;top:722.4px;width:13.8px;height:16.0px;background:#f6f6f6;"></div>
<svg class="r" style="left:1332.3000000000002px;top:727.9px;" width="8" height="5" viewBox="0 0 8 5"><path d="M0.5 0.5 H7.5 L4 4.5 Z" fill="#9a9a9a"/></svg>
<div class="t" style="left:1028.0px;top:726.23px;font-size:10.24px;color:#111;">OFFICIEL</div>
<div class="t" style="left:904.6px;top:750.73px;font-size:11.3px;color:#3a3a3a;">Estimateur</div>
<div class="r" style="left:1026.4px;top:749.6px;width:287.2px;height:17.7px;background:#f0f0f0;border:1px solid #a6a6a6;"></div>
<div class="t" style="left:1028.0px;top:754.12px;font-size:10.61px;color:#111;">Frédéric Roy</div>
<div class="r" style="left:1322.0px;top:749.6px;width:21.7px;height:23.7px;background:#f4f4f4;border:1px solid #dedede;"></div>
<svg class="r" style="left:1326.85px;top:764.3px;" width="12" height="3" viewBox="0 0 12 3"><g fill="#111"><rect x="0.5" y="0" width="1.8" height="1.8"/><rect x="5" y="0" width="1.8" height="1.8"/><rect x="9.5" y="0" width="1.8" height="1.8"/></g></svg>
<div class="t" style="left:904.6px;top:780.33px;font-size:11.31px;color:#0000f0;text-decoration:underline;">Suivi du supérieur</div>
<div class="r" style="left:1026.4px;top:778.5px;width:317.3px;height:18.0px;background:#f0f0f0;border:1px solid #a9b1b9;"></div>
<div class="r" style="left:1328.9px;top:779.5px;width:13.8px;height:16.0px;background:#f6f6f6;"></div>
<svg class="r" style="left:1332.3000000000002px;top:785.0px;" width="8" height="5" viewBox="0 0 8 5"><path d="M0.5 0.5 H7.5 L4 4.5 Z" fill="#9a9a9a"/></svg>
<div class="t" style="left:904.6px;top:818.42px;font-size:11.32px;color:#0000f0;text-decoration:underline;">Avertissement</div>
<div class="r" style="left:1026.4px;top:809.2px;width:317.3px;height:18.4px;background:#f0f0f0;border:1px solid #a9b1b9;"></div>
<div class="r" style="left:1328.9px;top:810.2px;width:13.8px;height:16.4px;background:#f6f6f6;"></div>
<svg class="r" style="left:1332.3000000000002px;top:815.9000000000001px;" width="8" height="5" viewBox="0 0 8 5"><path d="M0.5 0.5 H7.5 L4 4.5 Z" fill="#9a9a9a"/></svg>
<div class="t" style="left:904.6px;top:847.38px;font-size:11.36px;color:#111;">Vendu par</div>
<div class="r" style="left:1026.4px;top:843.0px;width:287.2px;height:18.5px;background:#f0f0f0;border:1px solid #a6a6a6;"></div>
<div class="r" style="left:1322.0px;top:842.4px;width:21.7px;height:21.8px;background:#f4f4f4;border:1px solid #dedede;"></div>
<svg class="r" style="left:1326.85px;top:855.2px;" width="12" height="3" viewBox="0 0 12 3"><g fill="#111"><rect x="0.5" y="0" width="1.8" height="1.8"/><rect x="5" y="0" width="1.8" height="1.8"/><rect x="9.5" y="0" width="1.8" height="1.8"/></g></svg>
<div class="t" style="left:1371.2px;top:723.50px;font-size:11.11px;color:#3a3a3a;">Créer par</div>
<div class="r" style="left:1484.4px;top:721.3px;width:317.0px;height:18.4px;background:#f0f0f0;border:1px solid #a6a6a6;"></div>
<div class="t" style="left:1486.0px;top:725.66px;font-size:10.68px;color:#111;">Frédéric Roy</div>
<div class="t" style="left:1371.2px;top:751.19px;font-size:11.12px;color:#3a3a3a;">Signée par</div>
<div class="r" style="left:1484.4px;top:749.4px;width:291.1px;height:18.4px;background:#f0f0f0;border:1px solid #a6a6a6;"></div>
<div class="r" style="left:1779.8px;top:749.0px;width:21.6px;height:24.8px;background:#f4f4f4;border:1px solid #dedede;"></div>
<svg class="r" style="left:1784.6px;top:764.8px;" width="12" height="3" viewBox="0 0 12 3"><g fill="#111"><rect x="0.5" y="0" width="1.8" height="1.8"/><rect x="5" y="0" width="1.8" height="1.8"/><rect x="9.5" y="0" width="1.8" height="1.8"/></g></svg>
<div class="t" style="left:1371.2px;top:780.53px;font-size:10.95px;color:#3a3a3a;">Fermée par</div>
<div class="r" style="left:1484.4px;top:778.6px;width:317.0px;height:17.9px;background:#f0f0f0;border:1px solid #a6a6a6;"></div>
<div class="r" style="left:896.5px;top:895.0px;width:470.0px;height:125.1px;border:1px solid #b0b0b0;"></div>
<div class="r" style="left:904.2px;top:893.6px;width:46.6px;height:4.0px;background:#fff;"></div>
<div class="t" style="left:906.2px;top:891.30px;font-size:11.11px;color:#3a3a3a;">Révision</div>
<div class="t" style="left:904.0px;top:920.38px;font-size:11.37px;color:#3a3a3a;">Notes sur la révision No.</div>
<div class="r" style="left:1044.4px;top:913.5px;width:64.9px;height:18.8px;background:#fff;border-top:2px solid #7a7a7a;border-left:2px solid #7a7a7a;border-bottom:1px solid #e6e6e6;border-right:1px solid #e6e6e6;"></div>
<div class="r" style="left:1092.0px;top:915.5px;width:15.8px;height:15.8px;background:#efefef;border-right:1.5px solid #777;border-bottom:1.5px solid #777;border-top:1px solid #fff;border-left:1px solid #fff;"></div>
<svg class="r" style="left:1096.15px;top:920.9px;" width="9" height="5" viewBox="0 0 9 5"><path d="M0 0 H9 L4.5 4.5 Z" fill="#000"/></svg>
<div class="t" style="left:1047.9px;top:918.67px;font-size:11.5px;color:#000;">0</div>
<svg class="r" style="left:1118.5px;top:909.8px;width:23.2px;height:22.5px;" width="24" height="23" viewBox="0 0 24 23"><path d="M9 0 H15 V8.5 H24 V14.5 H15 V23 H9 V14.5 H0 V8.5 H9 Z" fill="#0e1e29"/></svg>
<svg class="r" style="left:1143.2px;top:908px;width:26.1px;height:26px;" width="26" height="26" viewBox="0 0 26 26"><g fill="#0e1e29"><rect x="0" y="3.5" width="26" height="3.5" rx="1"/><rect x="8.5" y="0" width="9" height="4.5" rx="1"/><path d="M2.5 8 H23.5 L22.5 24 Q22.3 26 20.5 26 H5.5 Q3.7 26 3.5 24 Z"/></g><g fill="#fff"><rect x="6.5" y="11" width="2.2" height="11"/><rect x="10.5" y="11" width="2.2" height="11"/><rect x="14" y="11" width="2.2" height="11"/><rect x="17.5" y="11" width="2.2" height="11"/></g><rect x="10.5" y="1.3" width="5" height="1.6" fill="#fff"/></svg>
<div class="r" style="left:902.3px;top:943.3px;width:442.3px;height:57.0px;background:#f0f0f0;border:1px solid #a6a6a6;"></div>
<div class="r" style="left:1327.4px;top:944.3px;width:1.0px;height:55.0px;background:#fbfbfb;"></div>
<svg class="r" style="left:1331.5px;top:949.3px;" width="9" height="6" viewBox="0 0 9 6"><path d="M0.8 4.8 L4.5 1.2 L8.2 4.8" fill="none" stroke="#b8b8b8" stroke-width="1.3"/></svg>
<svg class="r" style="left:1331.5px;top:988.3px;" width="9" height="6" viewBox="0 0 9 6"><path d="M0.8 1.2 L4.5 4.8 L8.2 1.2" fill="none" stroke="#b8b8b8" stroke-width="1.3"/></svg>
<div class="r" style="left:1372.3px;top:895.0px;width:440.0px;height:125.1px;border:1px solid #b0b0b0;"></div>
<div class="r" style="left:1380.2px;top:893.6px;width:45.8px;height:4.0px;background:#fff;"></div>
<div class="t" style="left:1382.2px;top:891.74px;font-size:10.59px;color:#3a3a3a;">Scénario</div>
<div class="t" style="left:1380.1px;top:921.24px;font-size:11.29px;color:#3a3a3a;">Notes sur le scénario No.</div>
<div class="r" style="left:1521.6px;top:914.1px;width:58.7px;height:18.8px;background:#fff;border-top:2px solid #7a7a7a;border-left:2px solid #7a7a7a;border-bottom:1px solid #e6e6e6;border-right:1px solid #e6e6e6;"></div>
<div class="r" style="left:1563.0px;top:916.1px;width:15.8px;height:15.8px;background:#efefef;border-right:1.5px solid #777;border-bottom:1.5px solid #777;border-top:1px solid #fff;border-left:1px solid #fff;"></div>
<svg class="r" style="left:1567.15px;top:921.5px;" width="9" height="5" viewBox="0 0 9 5"><path d="M0 0 H9 L4.5 4.5 Z" fill="#000"/></svg>
<div class="t" style="left:1525.1px;top:919.27px;font-size:11.5px;color:#000;">1</div>
<svg class="r" style="left:1591.6px;top:912.4px;width:20.7px;height:20.6px;" width="24" height="23" viewBox="0 0 24 23"><path d="M9 0 H15 V8.5 H24 V14.5 H15 V23 H9 V14.5 H0 V8.5 H9 Z" fill="#0e1e29"/></svg>
<svg class="r" style="left:1614.9px;top:910.2px;width:25.5px;height:24.8px;" width="26" height="26" viewBox="0 0 26 26"><g fill="#0e1e29"><rect x="0" y="3.5" width="26" height="3.5" rx="1"/><rect x="8.5" y="0" width="9" height="4.5" rx="1"/><path d="M2.5 8 H23.5 L22.5 24 Q22.3 26 20.5 26 H5.5 Q3.7 26 3.5 24 Z"/></g><g fill="#fff"><rect x="6.5" y="11" width="2.2" height="11"/><rect x="10.5" y="11" width="2.2" height="11"/><rect x="14" y="11" width="2.2" height="11"/><rect x="17.5" y="11" width="2.2" height="11"/></g><rect x="10.5" y="1.3" width="5" height="1.6" fill="#fff"/></svg>
<div class="r" style="left:1378.4px;top:943.3px;width:420.0px;height:57.0px;background:#f0f0f0;border:1px solid #a6a6a6;"></div>
<div class="r" style="left:1780.7px;top:944.3px;width:1.0px;height:55.0px;background:#fbfbfb;"></div>
<svg class="r" style="left:1785.0500000000002px;top:949.3px;" width="9" height="6" viewBox="0 0 9 6"><path d="M0.8 4.8 L4.5 1.2 L8.2 4.8" fill="none" stroke="#b8b8b8" stroke-width="1.3"/></svg>
<svg class="r" style="left:1785.0500000000002px;top:988.3px;" width="9" height="6" viewBox="0 0 9 6"><path d="M0.8 1.2 L4.5 4.8 L8.2 1.2" fill="none" stroke="#b8b8b8" stroke-width="1.3"/></svg>
<div class="r" style="left:881.0px;top:1075.0px;width:1317.0px;height:19.7px;background:#f0f0f0;"></div>
<div class="r" style="left:881.0px;top:1075.0px;width:1317.0px;height:1.2px;background:#a0a0a0;"></div>
<div class="r" style="left:2199.0px;top:1073.0px;width:14.0px;height:21.7px;background:#f0f0f0;"></div>
<div class="r" style="left:977.5px;top:1076.0px;width:1.0px;height:18.0px;background:#c8c8c8;"></div>
<div class="t" style="left:881.0px;top:1080.79px;font-size:10.52px;color:#111;">Consultation</div>
<div class="t" style="left:981.5px;top:1080.57px;font-size:10.79px;color:#111;">Enregistrement 0 de 2</div>
<svg class="r" style="left:2203px;top:1084px;" width="10" height="11" viewBox="0 0 10 11"><g stroke="#8a8a8a" stroke-width="1.2"><path d="M10 1 L0 11 M10 5 L4 11"/></g></svg>
<div class="r" style="left:132.5px;top:41.3px;width:250.5px;height:88.5px;background:#fefefe;border-top:1px solid #d6d6d6;box-shadow:0 4px 7px rgba(0,0,0,0.16), -2px 2px 4px rgba(0,0,0,0.06);"></div>
<div class="t" style="left:143.7px;top:56.95px;font-size:15.42px;color:#979797;">Copy to local device</div>
<div class="t" style="left:143.7px;top:100.81px;font-size:15.34px;color:#979797;">Paste to remote session</div>
<div class="r" style="left:170.4px;top:40.3px;width:67.4px;height:24.0px;background:#fff;border:1px solid #333;"></div>
<div class="t" style="left:178.2px;top:46.61px;font-size:11.92px;color:#2a2a2a;">Clipboard</div>
<svg class="r" style="left:153px;top:22px;" width="20" height="28" viewBox="0 0 20 28"><g stroke="#1a1a2a" stroke-width="1.2" fill="#fff" stroke-linejoin="round"><path d="M6.5 3 Q6.5 1.2 8 1.2 Q9.5 1.2 9.5 3 V10 Q9.5 8.8 11 8.8 Q12.5 8.8 12.5 10.5 V11 Q12.5 10 14 10 Q15.5 10 15.5 11.8 Q15.7 11 17 11.2 Q18.5 11.5 18.5 13 V18 Q18.5 22 16 24 H8 Q6 22 4 19 L2.2 15.5 Q1.5 13.8 3 13.8 Q4.5 14 6.5 16.5 Z"/></g><path d="M4.5 21 Q6 26 11 26.5 Q16 26 17.5 22" fill="none" stroke="#333" stroke-width="1.1"/></svg>
<div class="r" style="left:129.0px;top:0.0px;width:53.0px;height:43.0px;border:4px solid #ff0000;box-shadow:3px 1px 5px rgba(0,0,0,0.25);"></div>
</body></html>
